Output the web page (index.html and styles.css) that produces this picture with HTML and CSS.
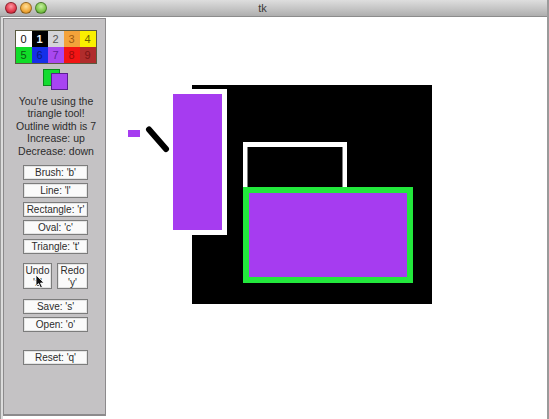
FILE: index.html
```html
<!DOCTYPE html>
<html>
<head>
<meta charset="utf-8">
<title>tk</title>
<link rel="stylesheet" href="styles.css">
</head>
<body>
<div class="window">
  <div class="titlebar">
    <div class="lights">
      <span class="light red"></span>
      <span class="light amber"></span>
      <span class="light green"></span>
    </div>
    <div class="title">tk</div>
  </div>
  <div class="main">
    <div class="panel">
      <div class="palette">
        <span class="cell c0">0</span>
        <span class="cell c1">1</span>
        <span class="cell c2">2</span>
        <span class="cell c3">3</span>
        <span class="cell c4">4</span>
        <span class="cell c5">5</span>
        <span class="cell c6">6</span>
        <span class="cell c7">7</span>
        <span class="cell c8">8</span>
        <span class="cell c9">9</span>
      </div>
      <div class="swatches">
        <span class="sw sw-outline"></span>
        <span class="sw sw-fill"></span>
      </div>
      <div class="info">You're using the<br>triangle tool!<br>Outline width is 7<br>Increase: up<br>Decrease: down</div>
      <div class="tools">
        <div class="btn">Brush: 'b'</div>
        <div class="btn">Line: 'l'</div>
        <div class="btn">Rectangle: 'r'</div>
        <div class="btn">Oval: 'c'</div>
        <div class="btn">Triangle: 't'</div>
      </div>
      <div class="history">
        <div class="btn tall undo">Undo<br>'z'
          <svg class="cursor" width="10" height="15" viewBox="0 0 10 15"><path d="M1 1 L1 12 L3.6 9.6 L5.6 14 L7.4 13.2 L5.5 9 L9 9 Z" fill="#111" stroke="#fff" stroke-width="0.8"/></svg>
        </div>
        <div class="btn tall redo">Redo<br>'y'</div>
      </div>
      <div class="file">
        <div class="btn">Save: 's'</div>
        <div class="btn">Open: 'o'</div>
      </div>
      <div class="file reset">
        <div class="btn">Reset: 'q'</div>
      </div>
    </div>
    <div class="canvas">
      <svg class="drawing" width="442" height="402" viewBox="0 0 442 402">
        <g transform="translate(-107,-17)">
          <rect x="192" y="85" width="240" height="219" fill="#000"/>
          <rect x="168" y="89" width="59" height="146" fill="#fff"/>
          <rect x="173" y="94" width="49" height="136" fill="#a63cf0"/>
          <rect x="128" y="130" width="12" height="7" fill="#a63cf0"/>
          <line x1="149" y1="129.5" x2="166" y2="149" stroke="#000" stroke-width="6" stroke-linecap="round"/>
          <rect x="243" y="142" width="104" height="60" fill="#fff"/>
          <rect x="247.5" y="147" width="95" height="55" fill="#000"/>
          <rect x="243" y="187" width="170" height="96" fill="#22e83c"/>
          <rect x="249" y="193" width="158" height="84" fill="#a63cf0"/>
        </g>
      </svg>
    </div>
  </div>
</div>
</body>
</html>
```

FILE: styles.css
```css
* { box-sizing: border-box; }
html, body {
  margin: 0;
  padding: 0;
  background: #ffffff;
}
body {
  font-family: "Liberation Sans", Arial, sans-serif;
  width: 549px;
  height: 419px;
  overflow: hidden;
}
.window {
  width: 549px;
  height: 419px;
  display: flex;
  flex-direction: column;
  background: #ffffff;
  border-right: 2px solid #9a9a9a;
}
.titlebar {
  height: 17px;
  flex: none;
  position: relative;
  display: flex;
  align-items: center;
  justify-content: center;
  background: linear-gradient(#dedede, #c2c2c2 60%, #aeaeae);
  border-bottom: 1px solid #8c8c8c;
}
.lights {
  position: absolute;
  left: 5px;
  top: 2px;
  display: flex;
  gap: 3px;
}
.light {
  width: 12px;
  height: 12px;
  border-radius: 50%;
  border: 1px solid rgba(0,0,0,0.35);
}
.light.red { background: radial-gradient(circle at 50% 35%, #ff9aa4, #e23a4c 60%, #b0182a); }
.light.amber { background: radial-gradient(circle at 50% 35%, #ffe09a, #f0a83a 60%, #c07a10); }
.light.green { background: radial-gradient(circle at 50% 35%, #c8f0a0, #7cc64a 60%, #4a9620); }
.title {
  font-size: 11px;
  color: #3a3a3a;
  margin-left: -22px;
}
.main {
  flex: 1;
  display: flex;
  padding-left: 3px;
  background: linear-gradient(90deg, #9a9a9a 0, #9a9a9a 1px, #dcdcdc 1px, #dcdcdc 3px, #fff 3px);
}
.panel {
  width: 103px;
  flex: none;
  margin-top: 1px;
  margin-bottom: 3px;
  background: #c4c2c4;
  border: 1px solid #8c8a8c;
  border-bottom-width: 2px;
  display: flex;
  flex-direction: column;
  align-items: center;
  padding-top: 11px;
}
.palette {
  display: grid;
  grid-template-columns: repeat(5, 16px);
  grid-template-rows: 16px 16px;
  border: 1px solid #5a5a40;
  margin-left: 2px;
}
.cell {
  font-size: 11px;
  line-height: 16px;
  text-align: center;
}
.c0 { background: #ffffff; color: #111; }
.c1 { background: #000000; color: #f4f4f4; font-weight: bold; }
.c2 { background: #d4d4d8; color: #555; }
.c3 { background: #f3a23a; color: #a05a10; }
.c4 { background: #faf000; color: #6a6200; }
.c5 { background: #10dc28; color: #0a5a10; }
.c6 { background: #1530e8; color: #0a1a80; }
.c7 { background: #a848f0; color: #6020a0; }
.c8 { background: #f21414; color: #a00a0a; }
.c9 { background: #b02c2c; color: #7a1414; }
.swatches {
  position: relative;
  width: 25px;
  height: 22px;
  margin-top: 5px;
  margin-left: 2px;
}
.sw {
  position: absolute;
  width: 17px;
  height: 17px;
}
.sw-outline {
  left: 0;
  top: 0;
  background: #14dc30;
  border: 1px solid #0c8a1c;
}
.sw-fill {
  left: 8px;
  top: 4px;
  background: #a844f2;
  border: 1px solid #5a1e90;
}
.info {
  margin-top: 4px;
  font-size: 10.5px;
  line-height: 12.4px;
  text-align: center;
  color: #2c2c2c;
  margin-left: 3px;
}
.btn {
  width: 65px;
  height: 15px;
  background: #fafafa;
  border: 1px solid #7c7c7c;
  box-shadow: inset 0 0 0 1px #e4e4e4;
  font-size: 10px;
  line-height: 13px;
  text-align: center;
  color: #2c2c2c;
  white-space: nowrap;
}
.tools {
  margin-top: 8px;
  margin-left: 2px;
  display: flex;
  flex-direction: column;
  gap: 3.4px;
}
.history {
  margin-top: 9px;
  margin-left: 2px;
  width: 65px;
  display: flex;
  justify-content: space-between;
}
.btn.tall {
  height: 26px;
  line-height: 12px;
  padding-top: 1px;
  position: relative;
}
.undo { width: 29px; }
.redo { width: 31px; }
.cursor {
  position: absolute;
  left: 11px;
  top: 10px;
}
.file {
  margin-top: 10px;
  margin-left: 2px;
  display: flex;
  flex-direction: column;
  gap: 3px;
}
.file.reset {
  margin-top: 18px;
}
.canvas {
  flex: 1;
  margin-left: 1px;
  background: #ffffff;
  position: relative;
  overflow: hidden;
}
.drawing {
  display: block;
}
```
